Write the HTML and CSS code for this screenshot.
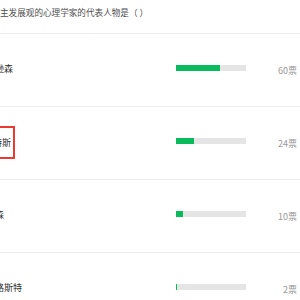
FILE: index.html
```html
<!DOCTYPE html>
<html lang="zh-CN">
<head>
    <meta charset="UTF-8">
    <meta name="viewport" content="width=device-width, initial-scale=1.0">
    <title>投票结果</title>
    <link rel="stylesheet" href="styles.css">
</head>
<body>
    <div class="poll">
        <div class="question">主发展观的心理学家的代表人物是（ ）</div>

        <div class="option">
            <div class="name"><span class="label">艾里克逊森</span></div>
            <div class="bar"><div class="fill" style="width: 62.5%"></div></div>
            <div class="votes">60票</div>
        </div>

        <div class="option">
            <div class="name"><span class="label marked">霍尔维特斯</span></div>
            <div class="bar"><div class="fill" style="width: 25%"></div></div>
            <div class="votes">24票</div>
        </div>

        <div class="option">
            <div class="name"><span class="label">格塞尔森</span></div>
            <div class="bar"><div class="fill" style="width: 10.4%"></div></div>
            <div class="votes">10票</div>
        </div>

        <div class="option">
            <div class="name"><span class="label">皮尔洛路斯特</span></div>
            <div class="bar"><div class="fill" style="width: 2.1%"></div></div>
            <div class="votes">2票</div>
        </div>
    </div>
</body>
</html>
```

FILE: styles.css
```css
body {
    margin: 0;
    background: #fff;
    font-family: "Noto Sans CJK SC", "Noto Sans", sans-serif;
    overflow: hidden;
}
.poll {
    width: 300px;
}
.question {
    height: 34px;
    box-sizing: border-box;
    padding-top: 6px;
    font-size: 8.6px;
    line-height: 12px;
    color: #4d4d4d;
    white-space: nowrap;
    border-bottom: 1px solid #ededed;
}
.option {
    display: flex;
    align-items: center;
    height: 72px;
    border-bottom: 1px solid #ededed;
}
.name {
    width: 176px;
    flex-shrink: 0;
    display: flex;
    align-items: center;
}
.label {
    margin-left: -32px;
    margin-bottom: 3px;
    font-size: 9px;
    line-height: 13px;
    color: #333;
    white-space: nowrap;
}
.label.marked {
    margin-left: -34px;
    margin-bottom: 1px;
    padding: 8px 2px 8px 0;
    border: 2px solid #ec3a32;
    border-left: none;
}
.bar {
    width: 70px;
    height: 6px;
    margin-bottom: 4px;
    background: #e5e5e5;
}
.fill {
    height: 100%;
    background: #09bb5c;
}
.votes {
    flex: 1;
    text-align: right;
    padding-right: 3px;
    font-size: 9px;
    color: #999;
}
```
